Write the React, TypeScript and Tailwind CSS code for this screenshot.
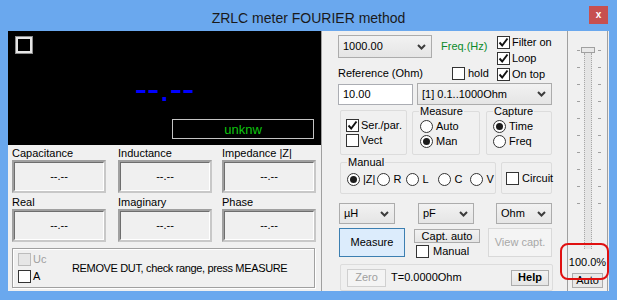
import React from "react";

function Check({ checked = false, disabled = false }: { checked?: boolean; disabled?: boolean }) {
  return (
    <span
      className={
        disabled
          ? "flex h-[13px] w-[13px] shrink-0 items-center justify-center border border-[#bcbcbc] bg-[#e6e6e6]"
          : "flex h-[13px] w-[13px] shrink-0 items-center justify-center border border-[#333333] bg-white"
      }
    >
      {checked && (
        <svg width="11" height="11" viewBox="0 0 11 11">
          <path d="M1.5 5.5 L4.2 8.5 L9.5 1.5" fill="none" stroke="#111" strokeWidth="1.9" />
        </svg>
      )}
    </span>
  );
}

function Radio({ checked = false }: { checked?: boolean }) {
  return (
    <span className="flex h-[13px] w-[13px] shrink-0 items-center justify-center rounded-full border border-[#333333] bg-white">
      {checked && <span className="h-[7px] w-[7px] rounded-full bg-[#1c1c1c]" />}
    </span>
  );
}

function Chevron() {
  return (
    <svg width="9" height="6" viewBox="0 0 9 6">
      <path d="M1 1 L4.5 4.5 L8 1" fill="none" stroke="#3c3c3c" strokeWidth="2" />
    </svg>
  );
}

function Combo({ text, className }: { text: string; className: string }) {
  return (
    <div
      className={
        "flex items-center justify-between border border-[#acacac] bg-gradient-to-b from-[#f2f2f2] to-[#e5e5e5] pl-[4px] pr-[5px] " +
        className
      }
    >
      <span>{text}</span>
      <Chevron />
    </div>
  );
}

function ValueBox() {
  return (
    <div className="flex h-[33px] w-[94px] items-center justify-center border-2 border-t-[#a0a0a0] border-l-[#a0a0a0] border-r-[#c8c8c8] border-b-[#c8c8c8]">
      <div className="flex h-full w-full items-center justify-center border border-t-[#6e6e6e] border-l-[#6e6e6e] border-r-[#ffffff] border-b-[#ffffff]">
        --.--
      </div>
    </div>
  );
}

export default function App() {
  return (
    <div className="relative h-[300px] w-[617px] overflow-hidden bg-[#6aa8ee] font-['Liberation_Sans',Arial,sans-serif] text-[11px] leading-[13px] text-black">
      {/* title bar */}
      <div className="relative flex h-[31px] items-center justify-center pt-[5px] text-[14px] text-[#1a1a1a]">
        ZRLC meter FOURIER method
        <div className="absolute right-[9px] top-[6px] flex h-[18px] w-[19px] items-center justify-center bg-[#c75050] text-[10px] font-bold leading-none text-white">
          x
        </div>
      </div>

      {/* client */}
      <div className="mx-[8px] flex h-[260px] bg-[#f0f0f0]">
        {/* left column */}
        <div className="flex w-[313px] flex-col">
          <div className="flex h-[114px] flex-col bg-black">
            <div className="ml-[7px] mt-[5px] h-[18px] w-[18px] border border-[#8c8c8c] p-0">
              <div className="h-full w-full border-2 border-[#e6e6e6] bg-black" />
            </div>
            <div className="mt-[16px] h-[37px] text-center text-[37px] leading-[37px] text-[#0000ff]">--.--</div>
            <div className="ml-[164px] mt-[12px] flex h-[20px] w-[142px] items-center justify-center border border-[#c4c4c4] text-[13px] text-[#0ec40e]">
              unknw
            </div>
          </div>

          <div className="flex pl-[4px] pt-[1px]">
            <div className="flex w-[94px] flex-col">
              <div className="h-[14px] leading-[14px]">Capacitance</div>
              <ValueBox />
              <div className="mt-[2px] h-[14px] leading-[14px]">Real</div>
              <ValueBox />
            </div>
            <div className="ml-[12px] flex w-[94px] flex-col">
              <div className="h-[14px] leading-[14px]">Inductance</div>
              <ValueBox />
              <div className="mt-[2px] h-[14px] leading-[14px]">Imaginary</div>
              <ValueBox />
            </div>
            <div className="ml-[10px] flex w-[94px] flex-col">
              <div className="h-[14px] leading-[14px]">Impedance |Z|</div>
              <ValueBox />
              <div className="mt-[2px] h-[14px] leading-[14px]">Phase</div>
              <ValueBox />
            </div>
          </div>

          <div className="ml-[4px] mt-[6px] flex h-[40px] w-[303px] items-center border border-[#a0a0a0] shadow-[inset_1px_1px_0_#ffffff,1px_1px_0_#ffffff]">
            <div className="ml-[5px] flex w-[30px] shrink-0 flex-col gap-[4px]">
              <div className="flex items-center gap-[2px]">
                <Check disabled />
                <span className="text-[#a0a0a0]">Uc</span>
              </div>
              <div className="flex items-center gap-[2px]">
                <Check />
                <span>A</span>
              </div>
            </div>
            <div className="ml-[24px] whitespace-nowrap tracking-[-0.35px]">REMOVE DUT, check range, press MEASURE</div>
          </div>
        </div>

        {/* separator */}
        <div className="w-px bg-[#a0a0a0]" />

        {/* middle column */}
        <div className="flex w-[245px] flex-col pl-[16px] pr-[14px]">
          <div className="flex">
            <div className="flex w-[159px] flex-col">
              <div className="mt-[4px] flex items-center">
                <Combo text="1000.00" className="h-[23px] w-[94px]" />
                <span className="ml-[9px] text-[#0a8a2a]">Freq.(Hz)</span>
              </div>
              <div className="mt-[9px] flex items-center">
                <span className="w-[114px]">Reference (Ohm)</span>
                <Check />
                <span className="ml-[3px]">hold</span>
              </div>
            </div>
            <div className="ml-[0px] mt-[5px] flex flex-col gap-[3px]">
              <div className="flex items-center gap-[2px]">
                <Check checked />
                <span>Filter on</span>
              </div>
              <div className="flex items-center gap-[2px]">
                <Check checked />
                <span>Loop</span>
              </div>
              <div className="flex items-center gap-[2px]">
                <Check checked />
                <span>On top</span>
              </div>
            </div>
          </div>

          <div className="mt-[2px] flex items-center">
            <div className="flex h-[21px] w-[75px] items-center border border-[#abadb3] bg-white pl-[4px]">10.00</div>
            <Combo text="[1] 0.1..1000Ohm" className="ml-[4px] h-[22px] w-[135px]" />
          </div>

          <div className="mt-[5px] flex h-[45px]">
            <div className="ml-[2px] flex w-[67px] flex-col justify-center gap-[2px] rounded-[2px] border border-[#dcdcdc] pl-[5px]">
              <div className="flex items-center gap-[2px]">
                <Check checked />
                <span>Ser./par.</span>
              </div>
              <div className="flex items-center gap-[2px]">
                <Check />
                <span>Vect</span>
              </div>
            </div>
            <div className="relative ml-[5px] mt-[1px] flex w-[68px] flex-col justify-end gap-[2px] rounded-[2px] border border-[#dcdcdc] pb-[6px] pl-[7px]">
              <span className="absolute -top-[7px] left-[6px] bg-[#f0f0f0] px-[1px]">Measure</span>
              <div className="flex items-center gap-[3px]">
                <Radio />
                <span>Auto</span>
              </div>
              <div className="flex items-center gap-[3px]">
                <Radio checked />
                <span>Man</span>
              </div>
            </div>
            <div className="relative ml-[6px] mt-[1px] flex w-[66px] flex-col justify-end gap-[2px] rounded-[2px] border border-[#dcdcdc] pb-[6px] pl-[6px]">
              <span className="absolute -top-[7px] left-[6px] bg-[#f0f0f0] px-[1px]">Capture</span>
              <div className="flex items-center gap-[3px]">
                <Radio checked />
                <span>Time</span>
              </div>
              <div className="flex items-center gap-[3px]">
                <Radio />
                <span>Freq</span>
              </div>
            </div>
          </div>

          <div className="mt-[7px] flex h-[32px]">
            <div className="relative ml-[2px] flex w-[156px] items-end rounded-[2px] border border-[#dcdcdc] pb-[7px] pl-[6px]">
              <span className="absolute -top-[7px] left-[6px] bg-[#f0f0f0] px-[1px]">Manual</span>
              <div className="flex items-center">
                <Radio checked />
                <span className="ml-[3px] mr-[2px]">|Z|</span>
                <Radio />
                <span className="ml-[3px] w-[13px]">R</span>
                <Radio />
                <span className="ml-[3px] w-[16px]">L</span>
                <Radio />
                <span className="ml-[3px] w-[16px]">C</span>
                <Radio />
                <span className="ml-[3px]">V</span>
              </div>
            </div>
            <div className="ml-[5px] flex w-[51px] items-center gap-[3px] rounded-[2px] border border-[#dcdcdc] pl-[4px]">
              <Check />
              <span>Circuit</span>
            </div>
          </div>

          <div className="mt-[9px] flex items-center">
            <Combo text="µH" className="ml-[1px] h-[21px] w-[56px]" />
            <Combo text="pF" className="ml-[23px] h-[21px] w-[56px]" />
            <Combo text="Ohm" className="ml-[22px] h-[21px] w-[56px]" />
          </div>

          <div className="mt-[4px] flex">
            <div className="ml-[1px] flex h-[29px] w-[66px] items-center justify-center border border-[#3c7fb1] bg-[#dcecfc]">
              Measure
            </div>
            <div className="ml-[9px] flex flex-col">
              <div className="mt-[1px] flex h-[14px] w-[66px] items-center justify-center border border-[#acacac] bg-gradient-to-b from-[#f2f2f2] to-[#e5e5e5]">
                Capt. auto
              </div>
              <div className="ml-[2px] mt-[2px] flex items-center gap-[4px]">
                <Check />
                <span>Manual</span>
              </div>
            </div>
            <div className="ml-[8px] flex h-[29px] w-[64px] items-center justify-center border border-[#d9d9d9] bg-[#f4f4f4] text-[#a8a8a8]">
              View capt.
            </div>
          </div>

          <div className="ml-[2px] mt-[6px] flex h-[27px] w-[213px] items-center rounded-[2px] border border-[#dcdcdc] pl-[6px]">
            <div className="flex h-[18px] w-[39px] items-center justify-center border border-[#d0d0d0] bg-[#f4f4f4] text-[#a0a0a0]">
              Zero
            </div>
            <span className="ml-[5px]">T=0.0000Ohm</span>
            <div className="ml-auto mr-[3px] flex h-[16px] w-[38px] items-center justify-center border border-[#acacac] bg-gradient-to-b from-[#f2f2f2] to-[#e5e5e5] font-bold">
              Help
            </div>
          </div>
        </div>

        {/* separator */}
        <div className="w-px bg-[#a0a0a0]" />

        {/* slider column */}
        <div className="relative flex w-[40px] flex-col items-center border-r border-[#a0a0a0]">
          <div className="mt-[16px] flex flex-col items-center">
            <div className="z-10 h-[6px] w-[14px] border border-[#a0a0a0] bg-[#e8e8e8]" />
            <div className="h-[196px] w-[8px] border-x border-dotted border-[#a8a8a8] bg-[#e4e4e4]" />
          </div>
          <div className="absolute left-[9px] top-[19px] flex flex-col gap-[16px]">
            {Array.from({ length: 10 }).map((_, i) => (
              <div key={i} className="flex w-[24px] justify-between">
                <span className="h-px w-[3px] bg-[#a0a0a0]" />
                <span className="h-px w-[3px] bg-[#a0a0a0]" />
              </div>
            ))}
          </div>
          <div className="mt-[7px] text-center">100.0%</div>
          <div className="mt-[4px] flex h-[15px] w-[31px] items-center justify-center border border-[#acacac] bg-[#e8e8e8]">
            Auto
          </div>
        </div>
      </div>

      {/* red annotation */}
      <div className="absolute left-[560px] top-[243px] h-[37px] w-[49px] rounded-[8px] border-[2px] border-[#e01010]" />
    </div>
  );
}
